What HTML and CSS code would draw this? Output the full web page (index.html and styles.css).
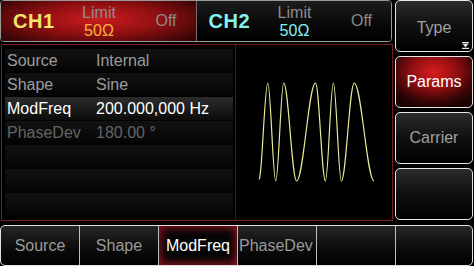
FILE: index.html
```html
<!DOCTYPE html>
<html>
<head>
<meta charset="utf-8">
<link rel="stylesheet" href="styles.css">
</head>
<body>
<div class="screen">
  <div class="leftcol">
    <div class="topbar">
      <div class="chan ch1">
        <span class="chname">CH1</span>
        <span class="limit"><span class="lim-l">Limit</span><span class="lim-v">50Ω</span></span>
        <span class="off">Off</span>
      </div>
      <div class="chan ch2">
        <span class="chname">CH2</span>
        <span class="limit"><span class="lim-l">Limit</span><span class="lim-v">50Ω</span></span>
        <span class="off">Off</span>
      </div>
    </div>
    <div class="panel">
      <div class="table">
        <div class="row"><span class="lbl">Source</span><span class="val">Internal</span></div>
        <div class="row"><span class="lbl">Shape</span><span class="val">Sine</span></div>
        <div class="row sel"><span class="lbl">ModFreq</span><span class="val">200.000,000 Hz</span></div>
        <div class="row dim"><span class="lbl">PhaseDev</span><span class="val">180.00 °</span></div>
        <div class="row"></div>
        <div class="row"></div>
        <div class="row"></div>
      </div>
      <div class="wave">
        <svg viewBox="234 45 157 175" preserveAspectRatio="none">
          <path d="M257 179 C260.2 181 262.8 83 266 83 C268.9 83 271.1 181 274 181 C276.9 181 279.1 83 282 83 C286.7 83 290.3 181 295 181 C301.8 181 307.2 83 314 83 C317.6 83 320.4 181 324 181 C326.9 181 329.1 83 332 83 C334.9 83 337.1 181 340 181 C344.7 181 348.3 83 353 83 C360.2 83 365.8 181 373 181" fill="none" stroke="#ecec9a" stroke-width="1.2"/>
        </svg>
      </div>
    </div>
  </div>
  <div class="rightcol">
    <div class="sbtn">Type
      <svg class="more" viewBox="0 0 7 7"><rect x="0" y="0" width="7" height="1.2" fill="#e8e8e8"/><polygon points="0.5,1.8 6.5,1.8 3.5,5.6" fill="#e8e8e8"/><rect x="0" y="5.8" width="7" height="1.2" fill="#e8e8e8"/></svg>
    </div>
    <div class="sbtn active">Params</div>
    <div class="sbtn">Carrier</div>
    <div class="sbtn"></div>
  </div>
  <div class="bottombar">
    <div class="tab">Source</div>
    <div class="tab">Shape</div>
    <div class="tab active">ModFreq</div>
    <div class="tab left">PhaseDev</div>
    <div class="tab"></div>
    <div class="tab last"></div>
  </div>
</div>
</body>
</html>
```
FILE: styles.css
```css
html, body {
  margin: 0;
  padding: 0;
  background: #000;
}
body {
  width: 474px;
  height: 266px;
  overflow: hidden;
  font-family: "Liberation Sans", Arial, sans-serif;
}
.screen {
  display: grid;
  grid-template-columns: 393px 1fr;
  grid-template-rows: 221px 41px;
  row-gap: 4px;
  column-gap: 2px;
  width: 474px;
  height: 266px;
}
.leftcol {
  display: flex;
  flex-direction: column;
  gap: 2px;
}
.topbar {
  height: 40px;
  display: flex;
  border: 1px solid #9a9a9a;
  border-radius: 4px;
  overflow: hidden;
  margin-right: 1px;
}
.chan {
  flex: 1;
  display: flex;
  align-items: center;
}
.ch1 {
  background: radial-gradient(ellipse 70% 85% at 50% 45%, #cc1c1e 0%, #900f11 45%, #3e0607 85%, #270304 100%);
  border-right: 1px solid #7a6a6a;
}
.ch2 {
  background: linear-gradient(#1c1c1c, #050505 70%, #000);
}
.chname {
  width: 61px;
  padding-left: 12px;
  font-weight: bold;
  font-size: 20px;
  letter-spacing: 0.5px;
}
.ch1 .chname { color: #f2e46a; }
.ch2 .chname { color: #86f2f0; }
.limit {
  width: 50px;
  display: flex;
  flex-direction: column;
  align-items: center;
  font-size: 16px;
  line-height: 18px;
  margin-top: 1px;
}
.lim-l { color: #8c8c8c; }
.ch1 .lim-v { color: #f4b43c; }
.ch2 .lim-v { color: #86f2f0; }
.off {
  margin-left: auto;
  padding-right: 19px;
  font-size: 16px;
  color: #8a8a8a;
}
.panel {
  flex: 1;
  display: flex;
  border: 1px solid #7a1c26;
  margin-left: 1px;
  background: #000;
}
.table {
  width: 228px;
  padding: 4px 0 0 3px;
  display: flex;
  flex-direction: column;
}
.row {
  height: 24px;
  box-sizing: border-box;
  display: flex;
  align-items: center;
  font-size: 16px;
  color: #9c9c9c;
  background: linear-gradient(#111 0%, #0a0a0a 60%, #030303 100%);
  border-bottom: 1px solid #000;
  padding-left: 2px;
}
.lbl { width: 89px; }
.row.sel {
  color: #fff;
  background: linear-gradient(#2c2c2c, #1a1a1a 55%, #0c0c0c);
}
.row.dim { color: #646464; }
.wave {
  flex: 1;
  border-left: 1px solid #262626;
  margin-left: 2px;
}
.wave svg {
  display: block;
  width: 100%;
  height: 100%;
}
.rightcol {
  display: flex;
  flex-direction: column;
  gap: 4px;
  padding-right: 1px;
}
.sbtn {
  height: 52px;
  box-sizing: border-box;
  border: 1.5px solid #e6e6e6;
  border-radius: 5px;
  background: linear-gradient(#2b2b2b, #101010 50%, #000);
  color: #a0a0a0;
  font-size: 16px;
  display: flex;
  align-items: center;
  justify-content: center;
  position: relative;
}
.sbtn:first-child { padding-top: 4px; }
.sbtn.active {
  color: #fff;
  background: radial-gradient(ellipse 70% 75% at 50% 30%, #d81c1e 0%, #8e0e10 45%, #350505 80%, #1a0202 100%);
}
.more {
  position: absolute;
  right: 3px;
  bottom: 2px;
  width: 7px;
  height: 7px;
}
.bottombar {
  grid-column: 1 / -1;
  display: flex;
  border: 1.5px solid #e0e0e0;
  border-radius: 5px;
  background: linear-gradient(#272727, #0e0e0e 50%, #000);
  overflow: hidden;
  margin-right: 1px;
}
.tab {
  width: 79px;
  flex: none;
  box-sizing: border-box;
  border-right: 1px solid #bdbdbd;
  display: flex;
  align-items: center;
  justify-content: center;
  font-size: 16px;
  color: #9a9a9a;
}
.tab.left { justify-content: flex-start; padding-left: 1px; }
.tab.last { border-right: none; flex: 1; }
.tab.active {
  color: #fff;
  background: #050505;
  box-shadow: inset 0 0 8px 2px #8a1420;
}
```
